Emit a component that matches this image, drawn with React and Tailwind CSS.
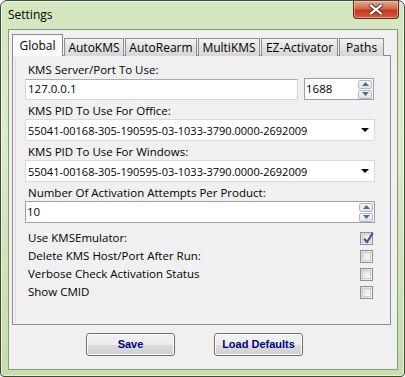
import React from 'react';

const ui = { fontFamily: '"Open Sans", "Noto Sans", sans-serif' };
const btnFont = { fontFamily: '"Liberation Sans", Arial, sans-serif' };

const PID = '55041-00168-305-190595-03-1033-3790.0000-2692009';

function Spinner() {
  return (
    <div className="flex flex-col gap-[1px] pr-[1px]">
      {['up', 'down'].map((d) => (
        <div
          key={d}
          className="w-[14px] h-[9px] flex items-center justify-center rounded-[2px] border border-[#b2b8c2] bg-[linear-gradient(180deg,#f7f8fa,#dfe4ea)]"
        >
          <svg width="7" height="4" viewBox="0 0 7 4">
            {d === 'up' ? (
              <path d="M0 4 L3.5 0 L7 4 Z" fill="#4f68a3" />
            ) : (
              <path d="M0 0 L3.5 4 L7 0 Z" fill="#4f68a3" />
            )}
          </svg>
        </div>
      ))}
    </div>
  );
}

function Combo({ value }) {
  return (
    <div className="w-[350px] h-[22px] flex items-center justify-between border border-[#dadada] bg-white pl-[2px] pr-[5px]">
      <span className="text-[11px] text-black leading-none">{value}</span>
      <svg width="8" height="4" viewBox="0 0 8 4">
        <path d="M0 0 L8 0 L4 4 Z" fill="#000" />
      </svg>
    </div>
  );
}

function Label({ children, className = '' }) {
  return <div className={`pl-[3px] h-[14px] text-[11.5px] leading-[14px] text-black ${className}`}>{children}</div>;
}

function Check({ checked }) {
  return (
    <div className="w-[13px] h-[13px] border border-[#8e8f8f] bg-[linear-gradient(135deg,#dcdcdc,#f6f6f6)] p-[1px]">
      <div className="relative w-full h-full border border-[#c9c9c9] bg-[linear-gradient(135deg,#e1e1e1,#fbfbfb)]">
        {checked && (
          <svg width="11" height="12" viewBox="0 0 11 12" className="absolute -top-[3px] left-0">
            <path d="M1.2 6.8 L4 10 L9.8 1" fill="none" stroke="#3a52a0" strokeWidth="2.1" />
          </svg>
        )}
      </div>
    </div>
  );
}

const tabs = [
  ['Global', 'w-[51px]'],
  ['AutoKMS', 'w-[60px]'],
  ['AutoRearm', 'w-[72px]'],
  ['MultiKMS', 'w-[62px]'],
  ['EZ-Activator', 'w-[77px]'],
  ['Paths', 'w-[45px]'],
];

const options = [
  ['Use KMSEmulator:', true],
  ['Delete KMS Host/Port After Run:', false],
  ['Verbose Check Activation Status', false],
  ['Show CMID', false],
];

export default function App() {
  return (
    <div className="w-[405px] h-[377px] bg-white" style={ui}>
      <div className="w-[405px] h-[377px] flex flex-col rounded-t-[7px] rounded-b-[4px] border border-[#404b3a] bg-[linear-gradient(180deg,#d3e6bf_0%,#dcecca_35%,#cfe3b7_70%,#c6deab_100%)] shadow-[inset_0_0_0_1px_rgba(255,255,255,0.55)]">
        {/* title bar */}
        <div className="h-[28px] flex justify-between pl-[7px] pr-[5px]">
          <span className="self-center text-[12px] text-black leading-none -mt-[1px]">Settings</span>
          <div className="w-[46px] h-[18px] rounded-b-[4px] border border-t-0 border-[#5f2417] bg-[linear-gradient(180deg,#e9a793_0%,#d2664c_45%,#c23a1e_55%,#d3593a_100%)] flex items-center justify-center shadow-[inset_0_0_0_1px_rgba(255,220,210,0.5)]">
            <svg width="14" height="11" viewBox="0 0 14 11">
              <path d="M2 1.5 L12 9.5 M12 1.5 L2 9.5" stroke="#46302c" strokeWidth="4" strokeLinecap="square" />
              <path d="M2 1.5 L12 9.5 M12 1.5 L2 9.5" stroke="#ffffff" strokeWidth="2.2" strokeLinecap="square" />
            </svg>
          </div>
        </div>

        {/* client area */}
        <div className="ml-[7px] mr-[6px] h-[341px] border border-[#8a9780] bg-[#f0f0f0] flex flex-col pl-[3px] pt-[4px]">
          {/* tabs */}
          <div className="flex items-end gap-[1px] h-[22px] -mb-[1px] relative z-10">
            {tabs.map(([t, w], i) =>
              i === 0 ? (
                <div
                  key={t}
                  className={`${w} h-[22px] border border-b-0 border-[#898c95] bg-[#fafafa] flex items-center justify-center text-[12px] text-black`}
                >
                  {t}
                </div>
              ) : (
                <div
                  key={t}
                  className={`${w} h-[18px] border border-b-0 border-[#898c95] bg-[linear-gradient(180deg,#f2f2f2,#e2e2e2_50%,#d6d6d6)] flex items-center justify-center text-[12px] text-black`}
                >
                  {t}
                </div>
              )
            )}
          </div>

          {/* panel */}
          <div className="w-[379px] h-[270px] border border-[#898c95] bg-[#f0f0f0] p-[2px]">
            <div className="h-full border-l border-[#dcdcdc] flex flex-col pl-[9px] pt-[5px]">
              <Label>KMS Server/Port To Use:</Label>
              <div className="flex items-center mt-[1px]">
                <div className="w-[273px] h-[21px] border border-[#d5d5d5] border-t-[#abadb3] bg-white flex items-center pl-[2px] text-[11.5px] text-black">
                  127.0.0.1
                </div>
                <div className="ml-[6px] w-[70px] h-[22px] border border-[#a0a0a0] bg-white flex items-center justify-between pl-[1px]">
                  <span className="text-[11.5px] text-black">1688</span>
                  <Spinner />
                </div>
              </div>

              <Label className="mt-[4px]">KMS PID To Use For Office:</Label>
              <div className="mt-[1px]">
                <Combo value={PID} />
              </div>

              <Label className="mt-[4px]">KMS PID To Use For Windows:</Label>
              <div className="mt-[1px]">
                <Combo value={PID} />
              </div>

              <Label className="mt-[4px]">Number Of Activation Attempts Per Product:</Label>
              <div className="mt-[1px] w-[350px] h-[22px] border border-[#a0a0a0] bg-white flex items-center justify-between pl-[1px]">
                <span className="text-[11.5px] text-black">10</span>
                <Spinner />
              </div>

              <div className="mt-[6px] flex flex-col">
                {options.map(([t, c]) => (
                  <div key={t} className="h-[18px] w-[350px] flex items-center justify-between pr-[2px]">
                    <span className="pl-[3px] text-[11.5px] text-black">{t}</span>
                    <Check checked={c} />
                  </div>
                ))}
              </div>
            </div>
          </div>

          {/* buttons */}
          <div className="flex mt-[8px] pl-[74px] gap-[39px]" style={btnFont}>
            {['Save', 'Load Defaults'].map((b) => (
              <button
                key={b}
                className="w-[89px] h-[23px] rounded-[3px] border border-[#707070] bg-[linear-gradient(180deg,#f2f2f2_0%,#ebebeb_50%,#dddddd_51%,#cfcfcf_100%)] shadow-[inset_0_0_0_1px_#fcfcfc] text-[11px] font-bold text-[#000080]"
              >
                {b}
              </button>
            ))}
          </div>
        </div>
      </div>
    </div>
  );
}
